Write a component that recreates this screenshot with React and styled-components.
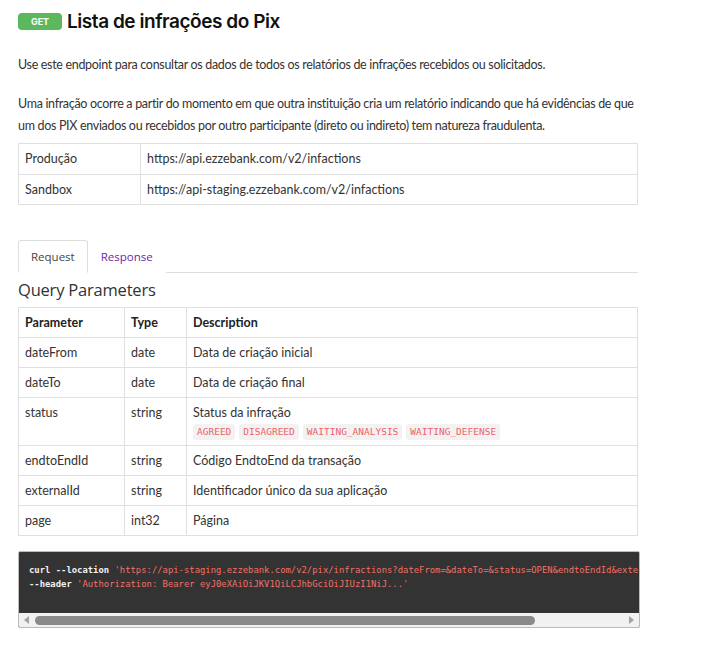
import React from "react";
import styled, {createGlobalStyle} from "styled-components";

const GlobalStyle = createGlobalStyle`
  html, body {
    margin: 0;
    padding: 0;
    background: #ffffff;
  }
  body {
    font-family: Lato, "Open Sans", sans-serif;
    color: #333333;
  }
`;

const Page = styled.main`
  width: 620px;
  padding: 8px 0 16px 18px;
`;

const TitleRow = styled.header`
  display: flex;
  align-items: center;
  gap: 5px;
  height: 26px;
`;

const MethodBadge = styled.span`
  display: inline-flex;
  align-items: center;
  justify-content: center;
  width: 44px;
  height: 17px;
  border-radius: 4px;
  background: #5cb85c;
  color: #ffffff;
  font-family: Inter, sans-serif;
  font-size: 9px;
  font-weight: 700;
`;

const Title = styled.h1`
  margin: 0;
  font-family: Inter, sans-serif;
  font-size: 19px;
  font-weight: 600;
  letter-spacing: -0.45px;
  color: #111111;
`;

const Paragraph = styled.p`
  margin: ${({$top}) => $top || "0"} 0 0 0;
  font-size: 12.5px;
  line-height: 22px;
  color: #333333;
  letter-spacing: -0.32px;
`;

const Table = styled.table`
  width: 620px;
  border-collapse: collapse;
  margin-top: ${({$top}) => $top || "0"};
  font-size: 12.5px;
  color: #333333;

  td, th {
    border: 1px solid #e0e0e0;
    padding: 0 6px;
    text-align: left;
    vertical-align: top;
    line-height: 16px;
  }

  th {
    font-weight: 700;
    color: #222222;
  }
`;

const Cell = styled.td`
  width: ${({$w}) => $w || "auto"};
  height: ${({$h}) => $h || "29px"};
  padding-top: 7px !important;
  box-sizing: border-box;
`;

const HeadCell = styled.th`
  width: ${({$w}) => $w || "auto"};
  height: 30px;
  padding-top: 7px !important;
  box-sizing: border-box;
`;

const Tabs = styled.nav`
  display: flex;
  margin-top: 35px;
  border-bottom: 1px solid #dddddd;
  width: 620px;
`;

const Tab = styled.button`
  height: 33px;
  margin-bottom: -1px;
  padding: 0 12px;
  background: #ffffff;
  border: 1px solid ${({$active}) => ($active ? "#dddddd" : "transparent")};
  border-bottom-color: ${({$active}) => ($active ? "#ffffff" : "transparent")};
  border-radius: 3px 3px 0 0;
  font-family: "Open Sans", sans-serif;
  font-size: 11.5px;
  color: ${({$active}) => ($active ? "#444444" : "#6b1fa8")};
  cursor: pointer;
`;

const SectionTitle = styled.h2`
  margin: 6px 0 6px 0;
  font-family: "Open Sans", sans-serif;
  font-size: 16.5px;
  font-weight: 400;
  line-height: 22px;
  color: #333333;
  letter-spacing: -0.2px;
`;

const Enum = styled.code`
  display: inline-block;
  margin: 3px 4px 0 0;
  padding: 0 4px;
  height: 16px;
  line-height: 16px;
  border-radius: 3px;
  background: #f2f2f2;
  color: #f0606a;
  font-family: "DejaVu Sans Mono", monospace;
  font-size: 9.5px;
`;

const CodeBlock = styled.div`
  width: 620px;
  margin-top: 15px;
  border: 1px solid #bbbbbb;
  border-radius: 2px;
  background: #333333;
  overflow: hidden;
`;

const Pre = styled.pre`
  margin: 0;
  height: 61px;
  padding: 11px 0 0 10px;
  box-sizing: border-box;
  white-space: pre;
  overflow: hidden;
  font-family: "DejaVu Sans Mono", monospace;
  font-size: 8.9px;
  font-weight: 700;
  line-height: 14px;
  color: #f2f2f2;
`;

const Str = styled.span`
  color: #f07167;
  font-weight: 400;
`;

const ScrollBar = styled.div`
  display: flex;
  align-items: center;
  gap: 6px;
  height: 14px;
  padding: 0 5px;
  background: #f1f1f1;
`;

const Arrow = styled.span`
  width: 0;
  height: 0;
  border-top: 4px solid transparent;
  border-bottom: 4px solid transparent;
  ${({$dir}) => ($dir === "left" ? "border-right: 5px solid #a3a3a3;" : "border-left: 5px solid #a3a3a3;")}
`;

const Track = styled.div`
  flex: 1;
  display: flex;
  align-items: center;
`;

const Thumb = styled.div`
  height: 9px;
  border-radius: 5px;
  background: #8a8a8a;
`;

const params = [
    ["dateFrom", "date", "Data de criação inicial"],
    ["dateTo", "date", "Data de criação final"],
    ["status", "string", "Status da infração"],
    ["endtoEndId", "string", "Código EndtoEnd da transação"],
    ["externalId", "string", "Identificador único da sua aplicação"],
    ["page", "int32", "Página"],
];

const statuses = ["AGREED", "DISAGREED", "WAITING_ANALYSIS", "WAITING_DEFENSE"];

export default function App() {
    return (
        <Page>
            <GlobalStyle/>
            <TitleRow>
                <MethodBadge>GET</MethodBadge>
                <Title>Lista de infrações do Pix</Title>
            </TitleRow>
            <Paragraph $top="20px">
                Use este endpoint para consultar os dados de todos os relatórios de infrações recebidos ou solicitados.
            </Paragraph>
            <Paragraph $top="17px">
                Uma infração ocorre a partir do momento em que outra instituição cria um relatório indicando que há evidências de que
                um dos PIX enviados ou recebidos por outro participante (direto ou indireto) tem natureza fraudulenta.
            </Paragraph>
            <Table $top="6px">
                <tbody>
                <tr>
                    <Cell $w="122px" $h="31px">Produção</Cell>
                    <Cell>https://api.ezzebank.com/v2/infactions</Cell>
                </tr>
                <tr>
                    <Cell $w="122px" $h="30px">Sandbox</Cell>
                    <Cell $h="30px">https://api-staging.ezzebank.com/v2/infactions</Cell>
                </tr>
                </tbody>
            </Table>
            <Tabs>
                <Tab $active>Request</Tab>
                <Tab>Response</Tab>
            </Tabs>
            <SectionTitle>Query Parameters</SectionTitle>
            <Table>
                <thead>
                <tr>
                    <HeadCell $w="106px">Parameter</HeadCell>
                    <HeadCell $w="62px">Type</HeadCell>
                    <HeadCell>Description</HeadCell>
                </tr>
                </thead>
                <tbody>
                {params.map(([name, type, desc]) => (
                    <tr key={name}>
                        <Cell $h={name === "status" ? "48px" : "30px"}>{name}</Cell>
                        <Cell $h={name === "status" ? "48px" : "30px"}>{type}</Cell>
                        <Cell $h={name === "status" ? "48px" : "30px"}>
                            {desc}
                            {name === "status" && (
                                <div>
                                    {statuses.map((s) => <Enum key={s}>{s}</Enum>)}
                                </div>
                            )}
                        </Cell>
                    </tr>
                ))}
                </tbody>
            </Table>
            <CodeBlock>
                <Pre>
                    {"curl --location "}
                    <Str>'https://api-staging.ezzebank.com/v2/pix/infractions?dateFrom=&dateTo=&status=OPEN&endtoEndId&externalId&page=1'</Str>
                    {"\n--header "}
                    <Str>'Authorization: Bearer eyJ0eXAiOiJKV1QiLCJhbGciOiJIUzI1NiJ...'</Str>
                </Pre>
                <ScrollBar>
                    <Arrow $dir="left"/>
                    <Track>
                        <Thumb style={{width: "85%"}}/>
                    </Track>
                    <Arrow $dir="right"/>
                </ScrollBar>
            </CodeBlock>
        </Page>
    );
}
